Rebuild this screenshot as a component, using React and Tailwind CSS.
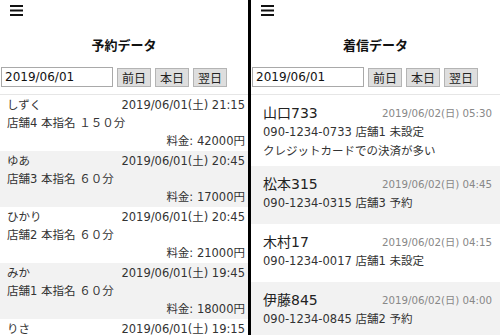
import React from "react";

const reservations = [
  { name: "しずく", date: "2019/06/01(土) 21:15", info: "店舗4 本指名 １５０分", fee: "料金: 42000円" },
  { name: "ゆあ", date: "2019/06/01(土) 20:45", info: "店舗3 本指名 ６０分", fee: "料金: 17000円" },
  { name: "ひかり", date: "2019/06/01(土) 20:45", info: "店舗2 本指名 ６０分", fee: "料金: 21000円" },
  { name: "みか", date: "2019/06/01(土) 19:45", info: "店舗1 本指名 ６０分", fee: "料金: 18000円" },
  { name: "りさ", date: "2019/06/01(土) 19:15", info: "店舗1 本指名 ６０分", fee: "料金: 18000円" },
];

const calls = [
  { name: "山口733", date: "2019/06/02(日) 05:30", info: "090-1234-0733 店舗1 未設定", note: "クレジットカードでの決済が多い" },
  { name: "松本315", date: "2019/06/02(日) 04:45", info: "090-1234-0315 店舗3 予約" },
  { name: "木村17", date: "2019/06/02(日) 04:15", info: "090-1234-0017 店舗1 未設定" },
  { name: "伊藤845", date: "2019/06/02(日) 04:00", info: "090-1234-0845 店舗2 予約" },
];

function Hamburger() {
  return (
    <div className="h-[25px] pl-[10px] pt-[5px]">
      <svg width="13" height="11" viewBox="0 0 13 11">
        <rect x="0" y="0" width="13" height="2" fill="#111" />
        <rect x="0" y="4.5" width="13" height="2" fill="#111" />
        <rect x="0" y="9" width="13" height="2" fill="#111" />
      </svg>
    </div>
  );
}

function Header({ title }) {
  return (
    <div className="border-b border-[#e6e6e6]">
      <Hamburger />
      <div className="h-[40px] flex items-center justify-center text-[13px] font-bold text-[#111] font-['Noto_Sans_CJK_JP',sans-serif]">
        {title}
      </div>
      <div className="flex items-center pl-[1px] pb-[7px] mt-[2px] gap-[4px]">
        <div className="w-[112px] h-[20px] border border-[#a9a9a9] bg-white text-[12px] leading-[18px] pl-[3px] text-[#111]">
          2019/06/01
        </div>
        {["前日", "本日", "翌日"].map((b) => (
          <div
            key={b}
            className="h-[19px] w-[34px] border border-[#b4b4b4] bg-[#dedede] text-[12px] leading-[17px] text-center text-[#222] font-['Noto_Sans_CJK_JP',sans-serif]"
          >
            {b}
          </div>
        ))}
      </div>
    </div>
  );
}

export default function App() {
  return (
    <div className="w-[500px] h-[335px] overflow-hidden flex bg-white text-[#333] font-['DejaVu_Sans','Noto_Sans_CJK_JP',sans-serif]">
      <div className="w-[248px] shrink-0 flex flex-col">
        <Header title="予約データ" />
        {reservations.map((r, i) => (
          <div
            key={i}
            className={`shrink-0 h-[56px] pl-[7px] pr-[3px] pt-[1px] text-[11.5px] leading-[18px] ${i % 2 === 1 ? "bg-[#f2f2f2]" : "bg-white"}`}
          >
            <div className="flex justify-between">
              <span>{r.name}</span>
              <span>{r.date}</span>
            </div>
            <div>{r.info}</div>
            <div className="text-right">{r.fee}</div>
          </div>
        ))}
      </div>
      <div className="w-[3px] shrink-0 bg-black" />
      <div className="flex-1 flex flex-col">
        <Header title="着信データ" />
        {calls.map((c, i) => (
          <div
            key={i}
            className={`shrink-0 min-h-[58px] pl-[12px] pr-[8px] pt-[8px] pb-[5px] ${i % 2 === 1 ? "bg-[#f2f2f2]" : "bg-white"}`}
          >
            <div className="flex justify-between items-center leading-[20px]">
              <span className="text-[14px] text-[#222]">{c.name}</span>
              <span className="text-[10.25px] text-[#888]">{c.date}</span>
            </div>
            <div className="text-[11.5px] leading-[19px]">{c.info}</div>
            {c.note && <div className="text-[11.5px] leading-[19px]">{c.note}</div>}
          </div>
        ))}
      </div>
    </div>
  );
}
